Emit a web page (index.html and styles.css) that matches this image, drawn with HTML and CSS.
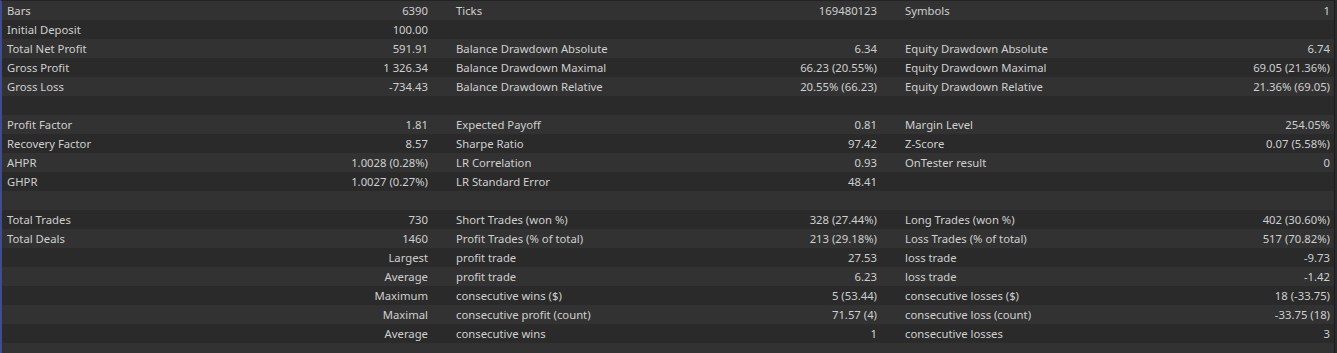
FILE: index.html
```html
<!DOCTYPE html>
<html>
<head>
<meta charset="utf-8">
<link rel="stylesheet" href="styles.css">
</head>
<body>
<div class="report">
  <div class="row"><div class="cell"><span>Bars</span><span>6390</span></div><div class="cell"><span>Ticks</span><span>169480123</span></div><div class="cell"><span>Symbols</span><span>1</span></div></div>
  <div class="row"><div class="cell"><span>Initial Deposit</span><span>100.00</span></div><div class="cell"></div><div class="cell"></div></div>
  <div class="row"><div class="cell"><span>Total Net Profit</span><span>591.91</span></div><div class="cell"><span>Balance Drawdown Absolute</span><span>6.34</span></div><div class="cell"><span>Equity Drawdown Absolute</span><span>6.74</span></div></div>
  <div class="row"><div class="cell"><span>Gross Profit</span><span>1 326.34</span></div><div class="cell"><span>Balance Drawdown Maximal</span><span>66.23 (20.55%)</span></div><div class="cell"><span>Equity Drawdown Maximal</span><span>69.05 (21.36%)</span></div></div>
  <div class="row"><div class="cell"><span>Gross Loss</span><span>-734.43</span></div><div class="cell"><span>Balance Drawdown Relative</span><span>20.55% (66.23)</span></div><div class="cell"><span>Equity Drawdown Relative</span><span>21.36% (69.05)</span></div></div>
  <div class="row"><div class="cell"></div><div class="cell"></div><div class="cell"></div></div>
  <div class="row"><div class="cell"><span>Profit Factor</span><span>1.81</span></div><div class="cell"><span>Expected Payoff</span><span>0.81</span></div><div class="cell"><span>Margin Level</span><span>254.05%</span></div></div>
  <div class="row"><div class="cell"><span>Recovery Factor</span><span>8.57</span></div><div class="cell"><span>Sharpe Ratio</span><span>97.42</span></div><div class="cell"><span>Z-Score</span><span>0.07 (5.58%)</span></div></div>
  <div class="row"><div class="cell"><span>AHPR</span><span>1.0028 (0.28%)</span></div><div class="cell"><span>LR Correlation</span><span>0.93</span></div><div class="cell"><span>OnTester result</span><span>0</span></div></div>
  <div class="row"><div class="cell"><span>GHPR</span><span>1.0027 (0.27%)</span></div><div class="cell"><span>LR Standard Error</span><span>48.41</span></div><div class="cell"></div></div>
  <div class="row"><div class="cell"></div><div class="cell"></div><div class="cell"></div></div>
  <div class="row"><div class="cell"><span>Total Trades</span><span>730</span></div><div class="cell"><span>Short Trades (won %)</span><span>328 (27.44%)</span></div><div class="cell"><span>Long Trades (won %)</span><span>402 (30.60%)</span></div></div>
  <div class="row"><div class="cell"><span>Total Deals</span><span>1460</span></div><div class="cell"><span>Profit Trades (% of total)</span><span>213 (29.18%)</span></div><div class="cell"><span>Loss Trades (% of total)</span><span>517 (70.82%)</span></div></div>
  <div class="row"><div class="cell"><span></span><span>Largest</span></div><div class="cell"><span>profit trade</span><span>27.53</span></div><div class="cell"><span>loss trade</span><span>-9.73</span></div></div>
  <div class="row"><div class="cell"><span></span><span>Average</span></div><div class="cell"><span>profit trade</span><span>6.23</span></div><div class="cell"><span>loss trade</span><span>-1.42</span></div></div>
  <div class="row"><div class="cell"><span></span><span>Maximum</span></div><div class="cell"><span>consecutive wins ($)</span><span>5 (53.44)</span></div><div class="cell"><span>consecutive losses ($)</span><span>18 (-33.75)</span></div></div>
  <div class="row"><div class="cell"><span></span><span>Maximal</span></div><div class="cell"><span>consecutive profit (count)</span><span>71.57 (4)</span></div><div class="cell"><span>consecutive loss (count)</span><span>-33.75 (18)</span></div></div>
  <div class="row"><div class="cell"><span></span><span>Average</span></div><div class="cell"><span>consecutive wins</span><span>1</span></div><div class="cell"><span>consecutive losses</span><span>3</span></div></div>
  <div class="row"><div class="cell"></div><div class="cell"></div><div class="cell"></div></div>
</div>
</body>
</html>
```
FILE: styles.css
```css
html, body {
  margin: 0;
  padding: 0;
  background: #2c2c2c;
  height: 100%;
  overflow: hidden;
}
.report {
  width: 1332px;
  height: 352px;
  border-top: 1px solid #232323;
  border-left: 2px solid #3c4b9c;
  border-right: 1px solid #1c1c1c;
  font-family: "Noto Sans", "Open Sans", sans-serif;
  font-size: 11.3px;
  color: #cfcfcf;
  background: #303030;
}
.row {
  display: grid;
  grid-template-columns: 448px 449px 1fr;
  height: 19px;
  line-height: 19px;
  background: #323232;
}
.row:nth-child(even) {
  background: #2a2a2a;
}
.cell {
  display: flex;
  justify-content: space-between;
  padding: 0 22px 0 5px;
  white-space: nowrap;
}
.cell:nth-child(2) {
  padding-left: 6px;
  padding-right: 22px;
}
.cell:nth-child(3) {
  padding-left: 6px;
  padding-right: 4px;
}
```
